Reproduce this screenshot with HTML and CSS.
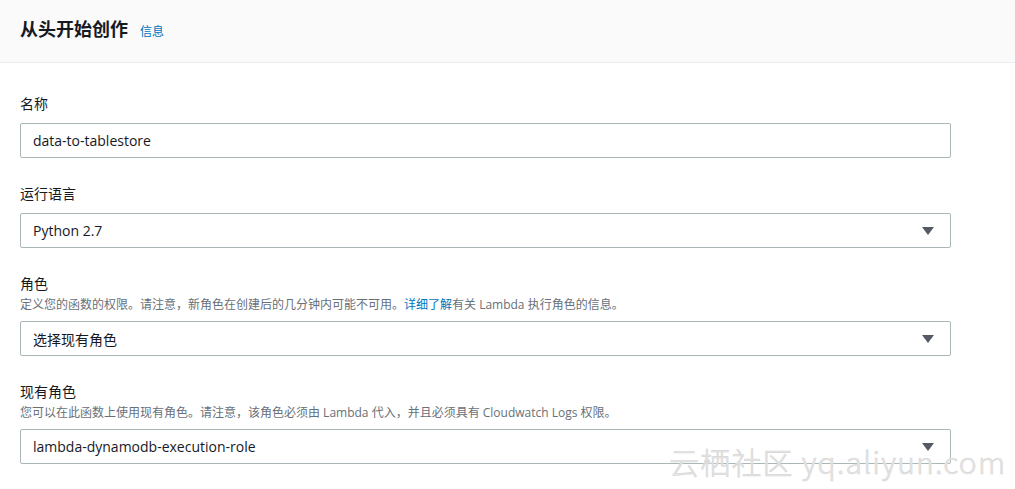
FILE: index.html
```html
<!DOCTYPE html>
<html lang="zh-CN">
<head>
<meta charset="utf-8">
<title>从头开始创作</title>
<link rel="stylesheet" href="styles.css">
</head>
<body>
<div class="panel">
  <header class="panel-header">
    <h2 class="panel-title">从头开始创作</h2>
    <a class="info-link" href="#">信息</a>
  </header>
  <div class="panel-body">
    <div class="field">
      <label class="field-label">名称</label>
      <div class="control"><span class="control-text">data-to-tablestore</span></div>
    </div>
    <div class="field">
      <label class="field-label">运行语言</label>
      <div class="control select"><span class="control-text">Python 2.7</span><span class="caret"></span></div>
    </div>
    <div class="field">
      <label class="field-label">角色</label>
      <p class="field-desc">定义您的函数的权限。请注意，新角色在创建后的几分钟内可能不可用。<a href="#" class="desc-link">详细了解</a>有关 Lambda 执行角色的信息。</p>
      <div class="control select"><span class="control-text">选择现有角色</span><span class="caret"></span></div>
    </div>
    <div class="field">
      <label class="field-label">现有角色</label>
      <p class="field-desc">您可以在此函数上使用现有角色。请注意，该角色必须由 Lambda 代入，并且必须具有 Cloudwatch Logs 权限。</p>
      <div class="control select"><span class="control-text">lambda-dynamodb-execution-role</span><span class="caret"></span></div>
    </div>
  </div>
  <div class="watermark">云栖社区 yq.aliyun.com</div>
</div>
</body>
</html>
```
FILE: styles.css
```css
* { box-sizing: border-box; }
html, body {
  margin: 0;
  padding: 0;
  background: #ffffff;
  font-family: "Open Sans", "Noto Sans CJK SC", sans-serif;
  color: #16191f;
}
.panel {
  position: relative;
  width: 1015px;
  height: 489px;
  overflow: hidden;
}
.panel-header {
  height: 63px;
  background: #fafafa;
  border-bottom: 1px solid #eaeded;
  display: flex;
  align-items: center;
  padding: 0 20px 4px;
}
.panel-title {
  margin: 0;
  font-size: 18px;
  font-weight: 700;
  line-height: 24px;
  color: #16191f;
}
.info-link {
  margin-left: 12px;
  margin-top: 3px;
  font-size: 12px;
  color: #0073bb;
  text-decoration: none;
}
.panel-body {
  padding: 31px 64px 0 20px;
}
.field {
  margin-bottom: 26px;
}
.field-label {
  display: block;
  font-size: 14px;
  line-height: 20px;
  color: #16191f;
  margin-bottom: 9px;
}
.field-desc {
  margin: -7px 0 7px;
  font-size: 12px;
  line-height: 18px;
  color: #687078;
}
.desc-link {
  color: #0073bb;
  text-decoration: none;
}
.control {
  width: 931px;
  height: 35px;
  border: 1px solid #aab7b8;
  border-radius: 2px;
  background: #ffffff;
  display: flex;
  align-items: center;
  justify-content: space-between;
  padding: 0 16px 0 12px;
}
.control-text {
  font-size: 14px;
  color: #16191f;
}
.caret {
  width: 0;
  height: 0;
  border-left: 6px solid transparent;
  border-right: 6px solid transparent;
  border-top: 8px solid #545b64;
}
.watermark {
  position: absolute;
  left: 669px;
  top: 441px;
  font-size: 30px;
  line-height: 40px;
  font-weight: 300;
  color: #e6e6e6;
  letter-spacing: 1.2px;
  white-space: nowrap;
  font-family: "Noto Sans CJK SC", "Open Sans", sans-serif;
  -webkit-text-stroke: 0.6px #d6d6d6;
  text-shadow: 0 0 1px #ffffff;
}
```
